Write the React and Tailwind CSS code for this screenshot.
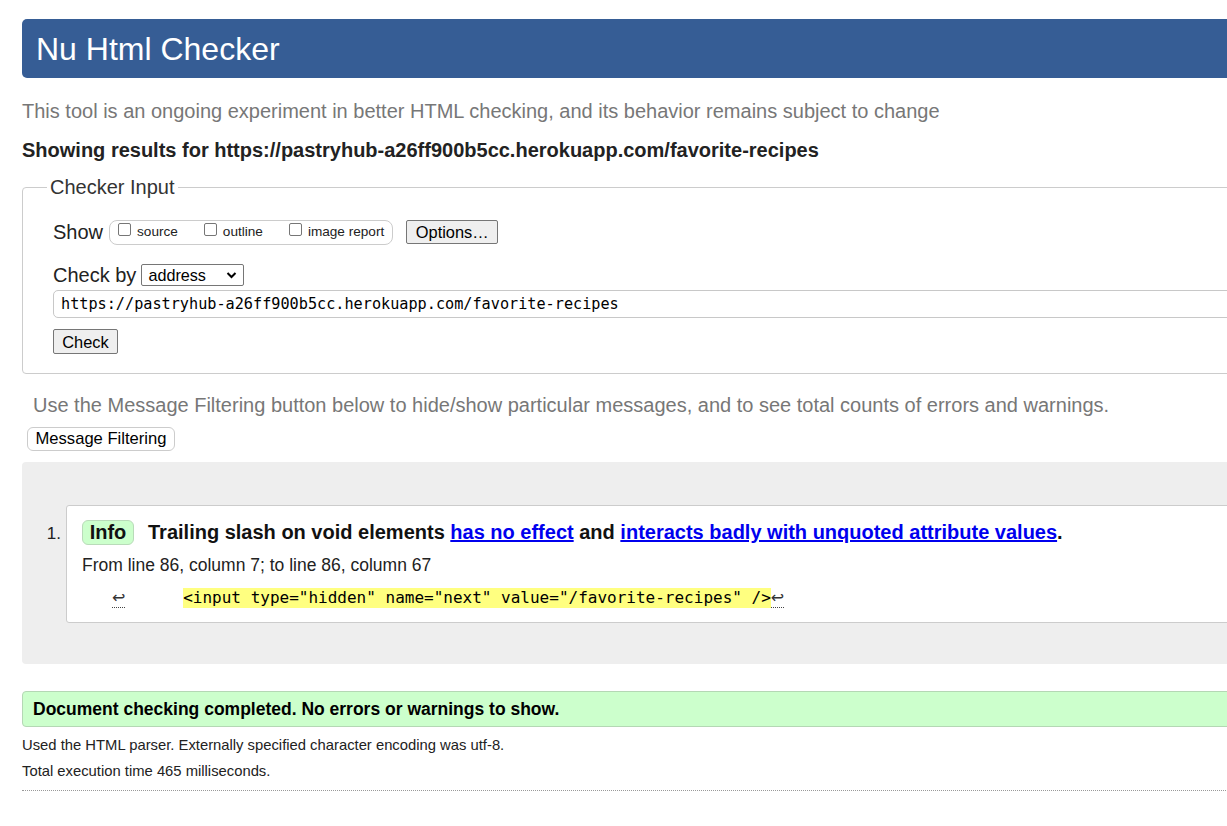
import React from 'react'

const sans = "font-['Liberation_Sans',Arial,sans-serif]"
const mono = "font-['DejaVu_Sans_Mono','Liberation_Mono',monospace]"

const Checkbox = ({ label }) => (
  <span className="flex items-center">
    <span className="mb-[5px] mr-[6px] inline-block h-[13px] w-[13px] rounded-[2px] border border-[#767676] bg-white" />
    <span className="text-[13.6px] leading-[16px] text-[#222]">{label}</span>
  </span>
)

const Button = ({ children, className = '' }) => (
  <span
    className={`flex items-center justify-center rounded-[2px] border border-[#767676] bg-[#efefef] text-[16.4px] leading-[18px] text-black ${className}`}
  >
    {children}
  </span>
)

const Arrow = () => (
  <span className="inline-block border-b border-dotted border-[#444] font-['DejaVu_Sans',sans-serif] text-[16px] leading-[18px] text-[#333]">
    ↩
  </span>
)

export default function App() {
  return (
    <div className={`h-[826px] w-[1227px] overflow-hidden bg-white ${sans}`}>
      <div className="ml-[22px] w-[1260px] pt-[19px]">
        {/* Title bar */}
        <h1 className="flex h-[59px] items-center rounded-[5px] bg-[#365d95] pl-[14px] text-[32px] leading-none text-white">
          Nu Html Checker
        </h1>

        <p className="mt-[22px] text-[20px] leading-[23px] text-[#777]">
          This tool is an ongoing experiment in better HTML checking, and its behavior remains subject to change
        </p>
        <p className="mt-[16px] text-[20px] font-bold leading-[23px] text-[#222]">
          Showing results for https://pastryhub-a26ff900b5cc.herokuapp.com/favorite-recipes
        </p>

        {/* Checker input */}
        <fieldset className="mt-[14px] rounded-[4px] border border-[#ccc] pb-[19px] pl-[24px]">
          <legend className="px-[3px] text-[20px] leading-[23px] text-[#333]">Checker Input</legend>
          <div className="pl-[6px]">
            <div className="mt-[20px] flex h-[26px] items-center">
              <span className="text-[20px] leading-[23px] text-[#222]">Show</span>
              <div className="ml-[6px] flex h-[25px] items-center gap-[26px] rounded-[8px] border border-[#ccc] pl-[8px] pr-[8px]">
                <Checkbox label="source" />
                <Checkbox label="outline" />
                <Checkbox label="image report" />
              </div>
              <Button className="ml-[13px] h-[24px] w-[92px]">Options…</Button>
            </div>

            <div className="mt-[18px] flex h-[24px] items-center">
              <span className="text-[20px] leading-[23px] text-[#222]">Check by</span>
              <span className="ml-[5px] flex h-[22px] w-[103px] items-center justify-between rounded-[2px] border border-[#767676] bg-white pl-[6px] pr-[6px] text-[16.2px] leading-[18px] text-black">
                address
                <svg width="11" height="8" viewBox="0 0 11 8" fill="none">
                  <path d="M1.5 2l4 4 4-4" stroke="#000" strokeWidth="2" />
                </svg>
              </span>
            </div>

            <div
              className={`mt-[3px] flex h-[28px] items-center rounded-[5px] border border-[#c8c8c8] pl-[7px] text-[15.2px] text-black ${mono}`}
            >
              https://pastryhub-a26ff900b5cc.herokuapp.com/favorite-recipes
            </div>

            <Button className="mt-[11px] h-[25px] w-[65px]">Check</Button>
          </div>
        </fieldset>

        <p className="ml-[11px] mt-[20px] text-[20px] leading-[23px] text-[#777]">
          Use the Message Filtering button below to hide/show particular messages, and to see total counts of errors and warnings.
        </p>
        <span className="ml-[5px] mt-[10px] flex h-[24px] w-[148px] items-center justify-center rounded-[6px] border border-[#ccc] bg-white text-[16.6px] leading-[18px] text-black">
          Message Filtering
        </span>

        {/* Results */}
        <div className="mt-[11px] flex rounded-[4px] bg-[#eee] pb-[41px] pt-[43px]">
          <div className="w-[44px] shrink-0 pr-[5px] pt-[19px] text-right text-[17px] leading-[20px] text-[#222]">1.</div>
          <div className="flex-1 rounded-[3px] border border-[#ccc] bg-white pb-[14px] pl-[15px] pt-[14px]">
            <div className="flex h-[25px] items-center">
              <span className="flex h-[25px] w-[52px] items-center justify-center rounded-[6px] border border-[#b9dbb9] bg-[#ccffcc] text-[20px] font-bold leading-[23px] text-[#111]">
                Info
              </span>
              <span className="ml-[14px] text-[20px] font-bold leading-[25px] text-[#111]">
                Trailing slash on void elements{' '}
                <a className="text-[#0000ee] underline">has no effect</a> and{' '}
                <a className="text-[#0000ee] underline">interacts badly with unquoted attribute values</a>.
              </span>
            </div>
            <p className="mt-[10px] text-[17.5px] leading-[20px] text-[#222]">
              From line 86, column 7; to line 86, column 67
            </p>
            <div className={`mt-[13px] flex h-[20px] items-center pl-[30px] text-[16px] text-black ${mono}`}>
              <Arrow />
              <span className="whitespace-pre leading-[20px]">{'      '}</span>
              <span className="whitespace-pre bg-[#ffff80] leading-[20px]">
                {'<input type="hidden" name="next" value="/favorite-recipes" />'}
              </span>
              <Arrow />
            </div>
          </div>
        </div>

        <p className="mt-[27px] flex h-[36px] items-center rounded-[4px] border border-[#b4d8b4] bg-[#ccffcc] pl-[10px] text-[17.5px] font-bold text-black">
          Document checking completed. No errors or warnings to show.
        </p>

        <p className="mt-[10px] text-[14.8px] leading-[17px] text-[#222]">
          Used the HTML parser. Externally specified character encoding was utf-8.
        </p>
        <p className="mt-[9px] text-[14.8px] leading-[17px] text-[#222]">Total execution time 465 milliseconds.</p>
        <div className="mt-[10px] border-b border-dotted border-[#999]" />
      </div>
    </div>
  )
}
